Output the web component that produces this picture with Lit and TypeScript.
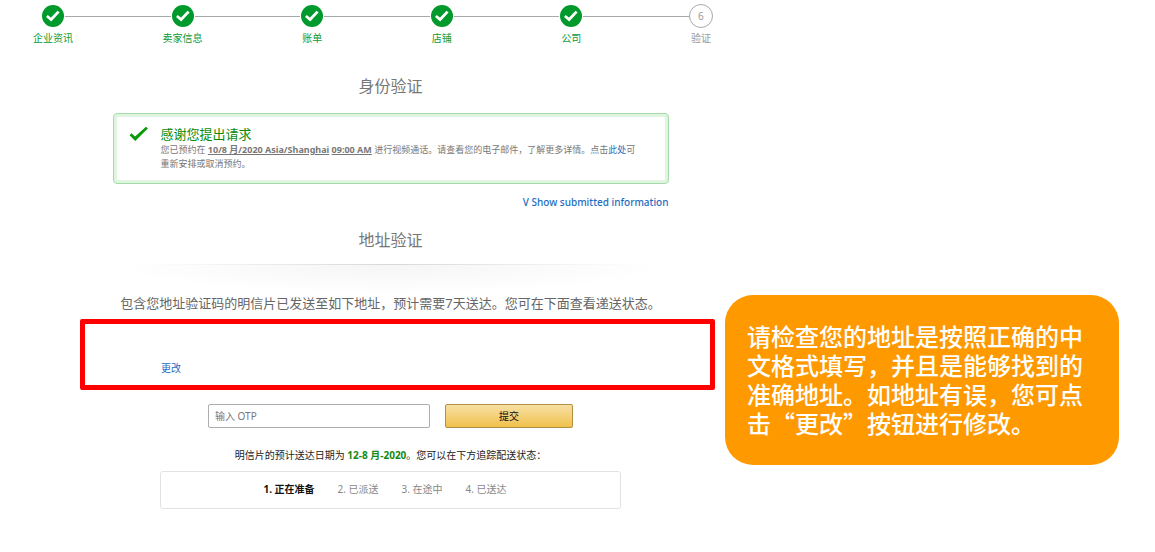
import { LitElement, html, css } from "lit";
import { customElement, property } from "lit/decorators.js";

interface Step {
  label: string;
  done: boolean;
}

const STEPS: Step[] = [
  { label: "企业资讯", done: true },
  { label: "卖家信息", done: true },
  { label: "账单", done: true },
  { label: "店铺", done: true },
  { label: "公司", done: true },
  { label: "验证", done: false },
];

const DELIVERY = ["正在准备", "已派送", "在途中", "已送达"];

@customElement("progress-steps")
export class ProgressSteps extends LitElement {
  @property({ attribute: false }) steps: Step[] = [];

  static styles = css`
    :host {
      display: block;
    }
    .steps {
      position: relative;
      display: flex;
      justify-content: space-between;
      margin: 0;
      padding: 0;
      list-style: none;
    }
    .steps::before {
      content: "";
      position: absolute;
      top: 12px;
      left: 20px;
      right: 20px;
      height: 1px;
      background: #a9a9a9;
    }
    .step {
      position: relative;
      display: flex;
      flex-direction: column;
      align-items: center;
      gap: 2px;
      width: 40px;
      font-size: 10px;
      line-height: 16px;
      color: #0a9a35;
      white-space: nowrap;
    }
    .pending {
      color: #999;
    }
    .mark {
      display: block;
      width: 24px;
      height: 24px;
    }
    .number {
      box-sizing: border-box;
      border: 1px solid #a9a9a9;
      border-radius: 50%;
      background: #fff;
      line-height: 22px;
      text-align: center;
    }
  `;

  render() {
    return html`<ol class="steps">
      ${this.steps.map((s, i) =>
        s.done
          ? html`<li class="step">
              <svg class="mark" viewBox="0 0 24 24" aria-hidden="true">
                <circle cx="12" cy="12" r="12" fill="#fff" />
                <circle cx="12" cy="12" r="11" fill="#009a2c" />
                <path d="M5.9 12L10.1 15.5L17.6 7.6" fill="none" stroke="#fff" stroke-width="2.8" />
              </svg>
              <span>${s.label}</span>
            </li>`
          : html`<li class="step pending" aria-current="step">
              <span class="mark number">${i + 1}</span>
              <span>${s.label}</span>
            </li>`
      )}
    </ol>`;
  }
}

@customElement("app-root")
export class AppRoot extends LitElement {
  static styles = css`
    :host {
      display: block;
      min-height: 100vh;
      background: #fff;
      color: #666;
      font-family: "Noto Sans", "Noto Sans CJK SC", sans-serif;
      font-size: 10px;
      line-height: 16px;
    }
    .page {
      display: grid;
      grid-template-columns: minmax(0, 725fr) minmax(0, 394fr);
      padding: 4px 36px 0 0;
    }
    progress-steps {
      margin: 0 4px 0 33px;
    }
    .column {
      max-width: 556px;
      margin: 0 auto;
    }
    .body {
      padding-left: 56px;
    }
    a {
      color: #1e6cc0;
      text-decoration: none;
    }
    h1,
    h2 {
      margin: 0;
      font-weight: 400;
      text-align: center;
      font-size: 16px;
      line-height: 24px;
      color: #777;
    }
    h1 {
      margin-top: 28px;
    }
    .alert {
      box-sizing: border-box;
      display: flex;
      gap: 12px;
      margin-top: 15px;
      padding: 11px 12px 11px 15px;
      min-height: 71px;
      border: 1px solid #a3dba8;
      border-radius: 4px;
      box-shadow: inset 0 0 0 3px #dff5df;
    }
    .tick {
      flex: none;
      width: 20px;
      height: 18px;
    }
    .alert-title {
      margin: 0;
      font-size: 13px;
      line-height: 18px;
      font-weight: 400;
      color: #0a8a0a;
    }
    .alert-text {
      margin: 0;
      font-size: 9px;
      line-height: 14px;
      color: #777;
    }
    .alert-text b {
      text-decoration: underline;
    }
    .submitted {
      margin-top: 10px;
      text-align: right;
      font-weight: 500;
    }
    .address-title {
      margin-top: 18px;
    }
    .divider {
      height: 28px;
      margin-top: 12px;
      background: radial-gradient(ellipse 50% 100% at 50% 0, #f5f5f5, #fff);
      border-top: 1px solid;
      border-image: linear-gradient(to right, #fff 5%, #d8d8d8 50%, #fff 95%) 1;
    }
    .notice {
      margin: 0;
      text-align: center;
      font-size: 13px;
      line-height: 20px;
      white-space: nowrap;
    }
    .address {
      box-sizing: border-box;
      display: flex;
      align-items: flex-end;
      height: 71px;
      margin: 6px 10px 0 80px;
      padding: 0 76px 9px;
      border: 5px solid #f00;
      border-radius: 2px;
    }
    .otp {
      display: flex;
      justify-content: center;
      gap: 15px;
      margin-top: 14px;
    }
    .otp-input,
    .otp-button {
      box-sizing: border-box;
      height: 24px;
      margin: 0;
      border-radius: 2px;
      font: inherit;
    }
    .otp-input {
      width: 222px;
      padding: 0 6px;
      border: 1px solid #adadad;
      background: #fff;
    }
    .otp-input::placeholder {
      color: #777;
      opacity: 1;
    }
    .otp-button {
      width: 128px;
      padding: 0;
      border: 1px solid #b3903f;
      background: linear-gradient(#f7dfa5, #f0c14b);
      color: #111;
    }
    .eta {
      margin: 19px 0 0;
      text-align: center;
      color: #222;
    }
    .eta b {
      color: #138a13;
    }
    .tracking {
      box-sizing: border-box;
      display: flex;
      justify-content: center;
      gap: 12px;
      width: 461px;
      max-width: 100%;
      margin: 8px auto 0;
      padding: 9px 10px 11px;
      border: 1px solid #e2e2e2;
      border-radius: 3px;
      list-style: none;
      color: #888;
    }
    .tracking li {
      margin-right: 11px;
    }
    .tracking .current {
      font-weight: 700;
      color: #111;
    }
    .callout {
      align-self: start;
      margin-top: 291px;
      padding: 26px 35px 28px 22px;
      border-radius: 28px;
      background: #f90;
      color: #fff;
      font-family: "Noto Sans CJK SC", sans-serif;
      font-size: 24px;
      font-weight: 500;
      line-height: 29px;
    }
    .callout p {
      margin: 0;
    }
  `;

  render() {
    return html`<div class="page">
      <main>
        <progress-steps .steps=${STEPS}></progress-steps>
        <div class="body">
          <div class="column">
            <h1>身份验证</h1>
            <section class="alert">
              <svg class="tick" viewBox="0 0 20 18" aria-hidden="true">
                <path d="M0.6 10.3L2.5 8.3L6 11.4L17 1.8L18.9 3.6L6.2 16Z" fill="#0a9a0a" />
              </svg>
              <div>
                <h3 class="alert-title">感谢您提出请求</h3>
                <p class="alert-text">您已预约在 <b>10/8 月/2020 Asia/Shanghai</b> <b>09:00 AM</b> 进行视频通话。请查看您的电子邮件，了解更多详情。点击<a href="#reschedule">此处</a>可<br />重新安排或取消预约。</p>
              </div>
            </section>
            <div class="submitted"><a href="#submitted">V Show submitted information</a></div>
            <h2 class="address-title">地址验证</h2>
            <div class="divider"></div>
            <p class="notice">包含您地址验证码的明信片已发送至如下地址，预计需要7天送达。您可在下面查看递送状态。</p>
          </div>
        </div>
        <div class="address"><a href="#change">更改</a></div>
        <div class="body">
          <form class="otp" @submit=${(e: Event) => e.preventDefault()}>
            <input class="otp-input" type="text" aria-label="输入 OTP" placeholder="输入 OTP" />
            <button class="otp-button" type="submit">提交</button>
          </form>
          <p class="eta">明信片的预计送达日期为 <b>12-8 月-2020</b>。您可以在下方追踪配送状态：</p>
          <ol class="tracking">
            ${DELIVERY.map((d, i) => html`<li class=${i === 0 ? "current" : ""}>${i + 1}. ${d}</li>`)}
          </ol>
        </div>
      </main>
      <aside class="callout">
        <p>请检查您的地址是按照正确的中文格式填写，并且是能够找到的准确地址。如地址有误，您可点击“更改”按钮进行修改。</p>
      </aside>
    </div>`;
  }
}
